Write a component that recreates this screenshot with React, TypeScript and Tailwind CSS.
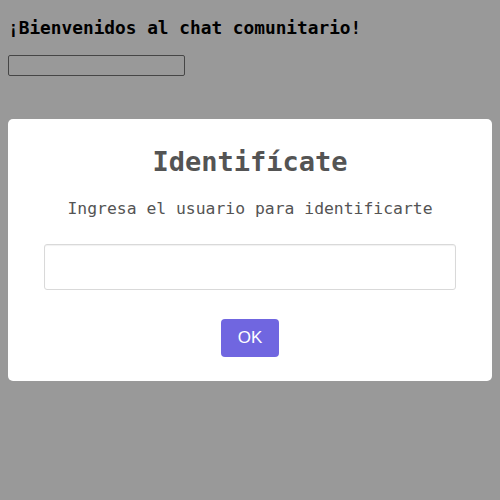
export default function App() {
  return (
    <div className="min-h-[500px] bg-white px-2 font-['DejaVu_Sans_Mono',monospace] text-black">
      <h2 className="pt-[17px] text-[17.8px] font-bold leading-[21px]">¡Bienvenidos al chat comunitario!</h2>
      <input
        type="text"
        className="mt-[17px] block h-[21px] w-[177px] rounded-[2px] border border-[#767676] bg-white"
      />

      {/* Modal overlay */}
      <div className="fixed inset-0 flex items-center justify-center bg-black/40 px-2">
        <div className="flex w-full flex-col items-center rounded-[5px] bg-white pt-[27px] pb-[24px]">
          <h2 className="text-[27px] font-bold leading-[32px] text-[#545454]">Identifícate</h2>
          <p className="mt-[19px] text-[16.4px] leading-[24px] text-[#545454]">
            Ingresa el usuario para identificarte
          </p>
          <input
            type="text"
            className="mt-[23px] h-[46px] w-[412px] rounded-[3px] border border-[#d9d9d9] bg-white shadow-[inset_0_1px_1px_rgba(0,0,0,0.06)] outline-none"
          />
          <button className="mt-[29px] h-[38px] w-[58px] rounded-[4px] bg-[#7066e0] font-['Liberation_Sans',Arial,sans-serif] text-[17px] text-white">
            OK
          </button>
        </div>
      </div>
    </div>
  );
}
